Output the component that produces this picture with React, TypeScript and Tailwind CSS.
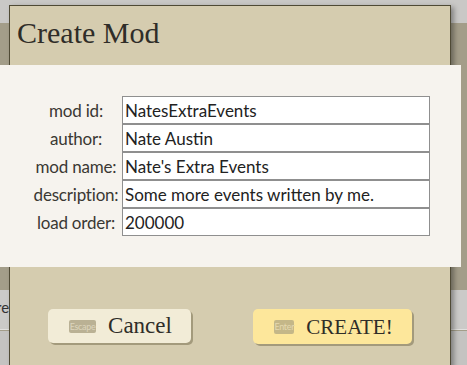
import React from 'react';

const fields = [
  { label: 'mod id:', value: 'NatesExtraEvents' },
  { label: 'author:', value: 'Nate Austin' },
  { label: 'mod name:', value: "Nate's Extra Events" },
  { label: 'description:', value: 'Some more events written by me.' },
  { label: 'load order:', value: '200000' },
];

const serif = { fontFamily: '"Liberation Serif", "DejaVu Serif", serif' };
const sans = { fontFamily: 'Lato, "Open Sans", sans-serif' };

export default function App() {
  return (
    <div className="relative w-[467px] h-[365px] overflow-hidden bg-[#a39d89]">
      {/* page behind the modal */}
      <div className="h-[23px] bg-[#c9c8c6]" />
      <div className="absolute left-0 top-[290px] w-full h-[40px] bg-[#cbcac8] border-b border-[#e2e1df]">
        <span className="block pt-[6px] -ml-[14px] text-[15px] text-[#333]" style={sans}>
          Create
        </span>
      </div>
      <div className="absolute left-0 top-[331px] w-full h-[40px] bg-[#c4c3c1]" />

      {/* dialog */}
      <div className="absolute left-[9px] top-[5px] w-[442px] h-[380px] bg-[#d5ccaf] border border-[#4f4a35] shadow-[3px_2px_5px_rgba(0,0,0,0.35)]">
        <h1 className="h-[59px] pl-[7px] pt-[9px] text-[30px] leading-[36px] text-[#2f2d28]" style={serif}>
          Create Mod
        </h1>

        <div className="-ml-[10px] w-[461px] h-[202px] bg-[#f6f3ee] pt-[31px]" style={sans}>
          {fields.map((f) => (
            <div key={f.label} className="flex items-center h-[28px]">
              <div className="ml-[30px] w-[92px] pt-[2px] text-center whitespace-nowrap text-[17px] tracking-[-0.2px] text-[#3a3833]">
                {f.label}
              </div>
              <div className="w-[308px] h-[28px] bg-white border border-[#8f8f8f] pl-[2px] pt-[1px] text-[17px] leading-[26px] text-[#222] whitespace-nowrap overflow-hidden">
                {f.value}
              </div>
            </div>
          ))}
        </div>

        <div className="flex justify-between px-[38px] pt-[42px]">
          <button className="w-[143px] h-[34px] rounded-[5px] bg-[#f2ecd7] shadow-[2px_2px_0_#a39a7c] flex items-center justify-center gap-[12px] pl-[2px]">
            <span className="w-[27px] h-[13px] rounded-[2px] bg-[#bab194] text-[#ddd5bd] text-[9px] leading-[13px] tracking-[-0.3px]" style={sans}>
              Escape
            </span>
            <span className="text-[23px] leading-[26px] text-[#2f2d28]" style={serif}>
              Cancel
            </span>
          </button>
          <button className="w-[159px] h-[35px] rounded-[5px] bg-[#fde79b] shadow-[2px_2px_0_#a39a7c] flex items-center justify-center gap-[12px] pl-[2px]">
            <span className="w-[20px] h-[14px] rounded-[2px] bg-[#c4b788] text-[#e4d9b0] text-[9px] leading-[14px] tracking-[-0.3px]" style={sans}>
              Enter
            </span>
            <span className="text-[21px] leading-[26px] text-[#2f2d28]" style={serif}>
              CREATE!
            </span>
          </button>
        </div>
      </div>
    </div>
  );
}
